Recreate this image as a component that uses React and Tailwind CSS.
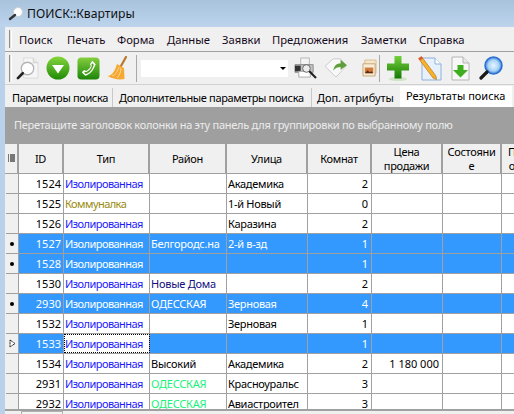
const font = { fontFamily: '"Noto Sans", sans-serif' };

const menu = [
  ['Поиск', 'w-[48px]'],
  ['Печать', 'w-[50px]'],
  ['Форма', 'w-[50px]'],
  ['Данные', 'w-[55px]'],
  ['Заявки', 'w-[50px]'],
  ['Предложения', 'w-[89px]'],
  ['Заметки', 'w-[58px]'],
  ['Справка', 'w-[70px]'],
];

const columns = [
  { title: 'ID', w: 'w-[45px]', cell: 'justify-end pr-[2px]' },
  { title: 'Тип', w: 'w-[86px]', cell: 'justify-start pl-[1px] tracking-[-0.55px]' },
  { title: 'Район', w: 'w-[77px]', cell: 'justify-start pl-[1px] tracking-[-0.25px]' },
  { title: 'Улица', w: 'w-[81px]', cell: 'justify-start pl-[1px] tracking-[-0.3px]' },
  { title: 'Комнат', w: 'w-[64px]', cell: 'justify-end pr-[3px]' },
  { title: 'Цена\nпродажи', w: 'w-[71px]', cell: 'justify-end pr-[3px]' },
  { title: 'Состояни\nе', w: 'w-[59px]', cell: 'justify-start pl-[1px]' },
  { title: 'Пл\nоб', w: 'w-[28px]', cell: 'justify-start pl-[1px]' },
];

const blue = 'text-[#1a1aff]';
const olive = 'text-[#9a8a10]';
const green = 'text-[#19f27a]';

const rows = [
  { id: 1524, type: 'Изолированная', tc: blue, street: 'Академика', rooms: 2 },
  { id: 1525, type: 'Коммуналка', tc: olive, street: '1-й Новый', rooms: 0 },
  { id: 1526, type: 'Изолированная', tc: blue, street: 'Каразина', rooms: 2 },
  { id: 1527, type: 'Изолированная', area: 'Белгородс.на', street: '2-й в-зд', rooms: 1, sel: true },
  { id: 1528, type: 'Изолированная', rooms: 1, sel: true },
  { id: 1530, type: 'Изолированная', tc: blue, area: 'Новые Дома', ac: 'text-[#101080]', rooms: 2 },
  { id: 2930, type: 'Изолированная', area: 'ОДЕССКАЯ', street: 'Зерновая', rooms: 4, sel: true },
  { id: 1532, type: 'Изолированная', tc: blue, street: 'Зерновая', rooms: 1 },
  { id: 1533, type: 'Изолированная', tc: blue, rooms: 1, sel: true, current: true },
  { id: 1534, type: 'Изолированная', tc: blue, area: 'Высокий', street: 'Академика', rooms: 2, price: '1 180 000' },
  { id: 2931, type: 'Изолированная', tc: blue, area: 'ОДЕССКАЯ', ac: green, street: 'Красноуральс', rooms: 3 },
  { id: 2932, type: 'Изолированная', tc: blue, area: 'ОДЕССКАЯ', ac: green, street: 'Авиастроител', rooms: 3 },
];

function Lens() {
  return (
    <svg width="23" height="23" viewBox="0 0 24 24">
      <path d="M8 1h10l5 5v16H8z" fill="#f6f6f6" stroke="#dadada" />
      <path d="M18 1v5h5" fill="#e6e6e6" stroke="#d0d0d0" />
      <circle cx="12" cy="12" r="6.500" fill="#fdfdfd" stroke="#b4b4b4" strokeWidth="1.400" />
      <path d="M7 17l-5 5" stroke="#222" strokeWidth="2.800" strokeLinecap="round" />
    </svg>
  );
}

function GreenDown() {
  return (
    <svg width="24" height="24" viewBox="0 0 24 24">
      <defs>
        <linearGradient id="gd" x1="0" y1="0" x2="0" y2="1">
          <stop offset="0" stopColor="#86d63c" />
          <stop offset="1" stopColor="#1f8a08" />
        </linearGradient>
      </defs>
      <circle cx="12" cy="12" r="11.500" fill="url(#gd)" />
      <path d="M6 9h12l-6 8.500z" fill="#fff" />
    </svg>
  );
}

function Phone() {
  return (
    <svg width="23" height="23" viewBox="0 0 24 24">
      <defs>
        <linearGradient id="ph" x1="0" y1="0" x2="0" y2="1">
          <stop offset="0" stopColor="#84cf3e" />
          <stop offset="1" stopColor="#1c8408" />
        </linearGradient>
      </defs>
      <rect x="0.500" y="0.500" width="23" height="23" rx="4" fill="url(#ph)" />
      <path d="M5 16l3.500 3.500c5-1 9-6 11-12L16 4l-2.500 3.500 1 2c-1 2-2.500 4-5 5l-2-1z" fill="#fff" />
      <path d="M7.500 16.500l1.500 1.500c4-1 7-5 8.500-10l-1.500-1.500-1 1.500 .5 1.500c-1 3-3 5-6 6.500l-1-.5z" fill="#4aa31e" />
    </svg>
  );
}

function Broom() {
  return (
    <svg width="21" height="24" viewBox="0 0 21 24">
      <path d="M19 1l-5 9" stroke="#b9772a" strokeWidth="2.200" strokeLinecap="round" />
      <path d="M10 8l7 4 .5 11c-5 1-12 0-17-3 3 0 7-3 9.500-12z" fill="#f6a832" />
      <path d="M5 20c3-1 6-5 7-9M10 22c2-2 4-6 4-10" stroke="#fbd88f" strokeWidth="1" fill="none" />
    </svg>
  );
}

function Printer() {
  return (
    <svg width="23" height="22" viewBox="0 0 24 23">
      <path d="M7 1h9v7H7z" fill="#f4f4f4" stroke="#b5b5b5" />
      <path d="M1 8h19v8H1z" fill="#c4c4c4" stroke="#8a8a8a" />
      <path d="M1 9h6v6H1z" fill="#333" />
      <path d="M5 15h12v6H5z" fill="#fff" stroke="#aaa" />
      <circle cx="13" cy="12" r="4" fill="#ececec" stroke="#666" />
      <path d="M16 15l7 7" stroke="#222" strokeWidth="2.200" />
    </svg>
  );
}

function TagArrow() {
  return (
    <svg width="24" height="22" viewBox="0 0 26 24">
      <path d="M1 10l9-8h8l6 8-11 12z" fill="#f8f8f8" stroke="#c8c8c8" />
      <path d="M10 15c1-6 4-8 8-8V3l7 6-7 5v-3c-3 0-6 1-8 4z" fill="#5f9e3a" />
    </svg>
  );
}

function Photo() {
  return (
    <svg width="15" height="18" viewBox="0 0 16 19">
      <path d="M3 1h12v14H3z" fill="#f4e6c8" stroke="#d8bd90" />
      <path d="M1 5h13v13H1z" fill="#f7ecd6" stroke="#c4a575" />
      <path d="M3 9h9v6H3z" fill="#d07a3c" />
      <path d="M3 15l3-3 2 2 2-1 2 2z" fill="#5a2a10" />
    </svg>
  );
}

function Plus() {
  return (
    <svg width="24" height="25" viewBox="0 0 24 25">
      <defs>
        <linearGradient id="pl" x1="0" y1="0" x2="0" y2="1">
          <stop offset="0" stopColor="#74d03a" />
          <stop offset="1" stopColor="#157a06" />
        </linearGradient>
      </defs>
      <ellipse cx="12" cy="23" rx="9" ry="2" fill="#cfe3c6" />
      <path d="M8.500 0h7v7.500H23v7h-7.500v8h-7v-8H1v-7h7.500z" fill="url(#pl)" />
    </svg>
  );
}

function PencilDoc() {
  return (
    <svg width="25" height="25" viewBox="0 0 25 25">
      <path d="M5 2h13l6 6v16H5z" fill="#e6f1fc" stroke="#8fb0dc" />
      <path d="M18 2v6h6" fill="#fff" stroke="#8fb0dc" />
      <path d="M1.500 2.500l3-2L19 20l.5 3.500L16 22z" fill="#f5b22a" stroke="#b86a14" strokeWidth="0.600" />
      <path d="M1.500 2.500l3-2 1.500 2-3 2z" fill="#e0533a" />
    </svg>
  );
}

function DownDoc() {
  return (
    <svg width="19" height="25" viewBox="0 0 19 25">
      <path d="M1 1h11l6 6v17H1z" fill="#f7f7f7" stroke="#b5b5b5" />
      <path d="M12 1v6h6" fill="#e8e8e8" stroke="#b5b5b5" />
      <path d="M6.500 9h6v5H17l-7.500 7.500L2 14h4.500z" fill="#3fae1e" />
    </svg>
  );
}

function BlueLens() {
  return (
    <svg width="24" height="24" viewBox="0 0 24 24">
      <defs>
        <radialGradient id="bl" cx="0.500" cy="0.500" r="0.500">
          <stop offset="0" stopColor="#e8f5ff" />
          <stop offset="0.650" stopColor="#a8d2f7" />
          <stop offset="1" stopColor="#2c78d8" />
        </radialGradient>
      </defs>
      <circle cx="14.500" cy="9.500" r="8.500" fill="url(#bl)" stroke="#2a6fd0" strokeWidth="1.500" />
      <path d="M8 16l-6 6" stroke="#1a1a1a" strokeWidth="3.200" strokeLinecap="round" />
    </svg>
  );
}

function Grip({ h }) {
  return <div className={`${h} w-[3px] border-l border-[#8f8f8f] border-r border-r-white bg-[#e4e4e4]`} />;
}

function Marker({ row }) {
  if (row.current) {
    return (
      <svg width="7" height="9" viewBox="0 0 7 9">
        <path d="M1 1l5 3.500L1 8z" fill="#fff" stroke="#000" strokeDasharray="1 0.500" />
      </svg>
    );
  }
  if (row.sel) return <div className="h-[4px] w-[4px] rounded-full bg-black" />;
  return null;
}

function Row({ row }) {
  const bg = row.sel ? 'bg-[#3399ff]' : 'bg-white';
  const values = [row.id, row.type, row.area, row.street, row.rooms, row.price, '', ''];
  const colors = ['', row.tc, row.ac, '', '', '', '', ''];
  return (
    <div className="flex h-[20px] shrink-0 border-b border-[#a0a0a0]">
      <div className="flex w-[13px] shrink-0 items-center justify-center border-r border-[#a0a0a0] bg-[#f0f0f0]">
        <Marker row={row} />
      </div>
      {columns.map((col, i) => {
        const focused = row.current && i === 1;
        const color = colors[i] || (row.sel ? 'text-white' : 'text-black');
        return (
          <div
            key={col.title}
            className={`flex ${col.w} shrink-0 items-center overflow-hidden whitespace-nowrap border-r border-[#a0a0a0] ${col.cell} ${focused ? 'bg-white outline-1 -outline-offset-1 outline-dotted outline-black' : bg} ${color}`}
          >
            {values[i]}
          </div>
        );
      })}
    </div>
  );
}

export default function App() {
  return (
    <div
      className="flex h-[414px] w-[514px] flex-col overflow-hidden bg-[#b9d1ea] text-[11px] leading-[14px] text-black"
      style={font}
    >
      <div className="flex h-[27px] shrink-0 items-center gap-[3px] bg-gradient-to-b from-[#a9c3dd] to-[#bcd4ec] pl-[8px] pt-[1px] text-[12.200px] text-[#111]">
        <svg width="16" height="16" viewBox="0 0 16 16">
          <circle cx="10" cy="6" r="4.500" fill="#fff" stroke="#d0d0d0" />
          <path d="M7 9l-5 4" stroke="#333" strokeWidth="2.400" strokeLinecap="round" />
        </svg>
        <span>ПОИСК::Квартиры</span>
      </div>

      <div className="ml-[5px] flex min-h-0 flex-1 flex-col bg-[#f0f0f0]">
        <div className="flex h-[25px] shrink-0 items-center border-b border-[#a0a0a0] pl-[4px]">
          <Grip h="h-[18px]" />
          <div className="ml-[7px] flex pt-[1px] text-[11.250px] text-[#160a20]">
            {menu.map(([label, w]) => (
              <span key={label} className={w}>{label}</span>
            ))}
          </div>
        </div>

        <div className="flex h-[33px] shrink-0 items-center border-b border-[#d0d0d0] pl-[4px]">
          <Grip h="h-[27px]" />
          <div className="ml-[4px] flex w-[120px] items-center gap-[7px]">
            <Lens />
            <GreenDown />
            <Phone />
            <Broom />
          </div>
          <div className="h-[27px] w-px bg-[#a8a8a8]" />
          <div className="ml-[4px] flex h-[17px] w-[147px] items-center justify-end bg-white pr-[2px]">
            <div className="h-0 w-0 border-x-[3px] border-t-[3px] border-x-transparent border-t-black" />
          </div>
          <div className="ml-[6px] flex w-[85px] items-center gap-[7px]">
            <Printer />
            <TagArrow />
            <div className="ml-[7px]"><Photo /></div>
          </div>
          <div className="h-[27px] w-px bg-[#a8a8a8]" />
          <div className="ml-[6px] flex items-center gap-[7px]">
            <Plus />
            <PencilDoc />
            <div className="ml-[2px]"><DownDoc /></div>
            <div className="ml-[2px]"><BlueLens /></div>
          </div>
        </div>

        <div className="flex h-[22px] shrink-0 items-end whitespace-nowrap bg-[#f0f0f0] pl-[1px]">
          <div className="flex h-[19px] w-[107px] items-center border-r border-[#c8c8c8] pl-[6px] tracking-[-0.35px]">Параметры поиска</div>
          <div className="flex h-[19px] w-[199px] items-center border-r border-[#c8c8c8] pl-[6px] tracking-[-0.35px]">Дополнительные параметры поиска</div>
          <div className="flex h-[19px] w-[88px] items-center pl-[5px]">Доп. атрибуты</div>
          <div className="flex h-[21px] w-[112px] items-center bg-white pb-[2px] pl-[6px]">Результаты поиска</div>
        </div>

        <div className="flex h-[36px] shrink-0 items-center whitespace-nowrap bg-[#9f9f9f] pl-[9px] tracking-[-0.26px] text-[#ececec]">
          Перетащите заголовок колонки на эту панель для группировки по выбранному полю
        </div>

        <div className="flex h-[31px] shrink-0 border-y border-[#a0a0a0] pl-px tracking-[-0.3px]">
          <div className="flex w-[13px] shrink-0 items-center justify-center border-r-2 border-[#a0a0a0]">
            <svg width="7" height="9" viewBox="0 0 7 9">
              <path d="M0 1h1M0 3h1M0 5h1M0 7h1M2 1h5M2 3h5M2 5h5M2 7h5" stroke="#000" strokeWidth="1" />
            </svg>
          </div>
          {columns.map((col) => (
            <div
              key={col.title}
              className={`flex ${col.w} shrink-0 items-center justify-center overflow-hidden whitespace-pre-line border-r-2 border-[#a0a0a0] text-center`}
            >
              {col.title}
            </div>
          ))}
        </div>

        <div className="flex min-h-0 flex-1 flex-col overflow-hidden pl-px">
          {rows.map((row) => (
            <Row key={row.id} row={row} />
          ))}
        </div>

        <div className="flex h-[5px] shrink-0 border-t-2 border-[#a0a0a0] pl-[16px]">
          <div className="h-[3px] w-[42px] border border-b-0 border-[#b0b0b0] bg-[#f4f4f4]" />
        </div>
      </div>
    </div>
  );
}
